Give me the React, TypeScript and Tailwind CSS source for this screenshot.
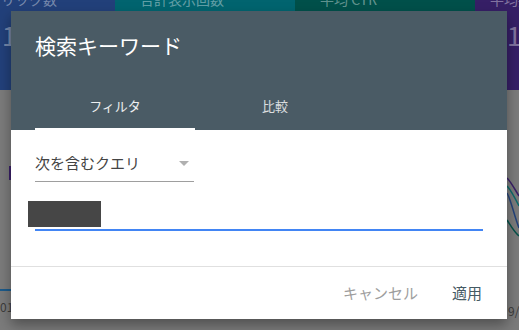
import React from 'react';

const jp = { fontFamily: '"Noto Sans CJK JP", "Noto Sans", sans-serif' };

const App = () => {
  return (
    <div className="relative w-[519px] h-[330px] overflow-hidden bg-[#7b7b7b]" style={jp}>
      {/* Background page (dimmed) */}
      <div className="flex h-[90px] text-[14px] leading-[16px] text-white/40">
        <div className="w-[115px] bg-[#22407a] overflow-hidden">
          <div className="-mt-[9px] -ml-[13px] whitespace-nowrap">クリック数</div>
          <div className="mt-[16px] ml-[2px] text-[26px] leading-[24px] text-white/40">1</div>
        </div>
        <div className="w-[180px] bg-[#01646f] overflow-hidden">
          <div className="-mt-[9px] pl-[25px] whitespace-nowrap">合計表示回数</div>
        </div>
        <div className="w-[180px] bg-[#00504a] overflow-hidden">
          <div className="-mt-[9px] pl-[25px] whitespace-nowrap">平均 CTR</div>
        </div>
        <div className="flex-1 bg-[#361f66] overflow-hidden">
          <div className="-mt-[9px] pl-[15px] whitespace-nowrap">平均掲載順位</div>
          <div className="mt-[16px] pl-[32px] text-[26px] leading-[24px] text-white/40">1</div>
        </div>
      </div>

      {/* Chart fragments behind the overlay */}
      <svg className="absolute left-0 top-[90px]" width="519" height="240" viewBox="0 90 519 240">
        <path d="M0 290 L11 290" stroke="#1c5a8a" strokeWidth="2" fill="none" />
        <path d="M10 166 L10 180" stroke="#3a2068" strokeWidth="2" fill="none" />
        <path d="M507 178 C511 182 514 188 519 196" stroke="#3a2068" strokeWidth="1.5" fill="none" />
        <path d="M507 186 C511 190 514 196 519 206" stroke="#0d6a6a" strokeWidth="1.5" fill="none" />
        <path d="M507 193 C511 200 514 215 519 228" stroke="#24437a" strokeWidth="1.5" fill="none" />
        <path d="M507 220 C511 226 514 232 519 236" stroke="#06524a" strokeWidth="1.5" fill="none" />
      </svg>
      <div className="absolute left-0 top-[300px] text-[12px] leading-[14px] text-[#3c3c3c]">01</div>
      <div className="absolute left-[508px] top-[304px] text-[12px] leading-[14px] text-[#3c3c3c]">9/</div>

      {/* Dialog */}
      <div className="absolute left-[11px] top-[11px] w-[496px] h-[308px] bg-white flex flex-col shadow-[0_6px_12px_rgba(0,0,0,0.35)]">
        <div className="bg-[#4a5b65] h-[119px] flex flex-col">
          <div className="h-[71px] pt-[22px] pl-[24px] text-[21px] leading-[24px] text-white">検索キーワード</div>
          <div className="flex h-[48px] pl-[24px]">
            <div className="w-[160px] relative flex items-center justify-center text-[13px] text-white/90">
              フィルタ
              <div className="absolute left-0 right-0 bottom-0 h-[2px] bg-white" />
            </div>
            <div className="w-[160px] flex items-center justify-center text-[13px] text-white/80">比較</div>
          </div>
        </div>

        <div className="px-[24px] pt-[20px]">
          <div className="w-[159px] h-[32px] border-b border-[#9e9e9e] flex items-start justify-between">
            <span className="text-[15px] leading-[26px] text-[#444]">次を含むクエリ</span>
            <svg width="10" height="5" viewBox="0 0 10 5" className="mt-[11px] mr-[5px]">
              <path d="M0 0 L10 0 L5 5 Z" fill="#b0b0b0" />
            </svg>
          </div>
          <div className="pt-[19px] pb-[2px] border-b-2 border-[#4285f4]">
            <div className="w-[73px] h-[26px] -ml-[7px] bg-[#464646]" />
          </div>
        </div>

        <div className="mt-[35px] border-t border-[#e0e0e0] h-[53px] flex items-center justify-end pr-[25px] gap-[34px] text-[15px]">
          <span className="text-[#9e9e9e]">キャンセル</span>
          <span className="text-[#455a64]">適用</span>
        </div>
      </div>
    </div>
  );
};

export default App;
